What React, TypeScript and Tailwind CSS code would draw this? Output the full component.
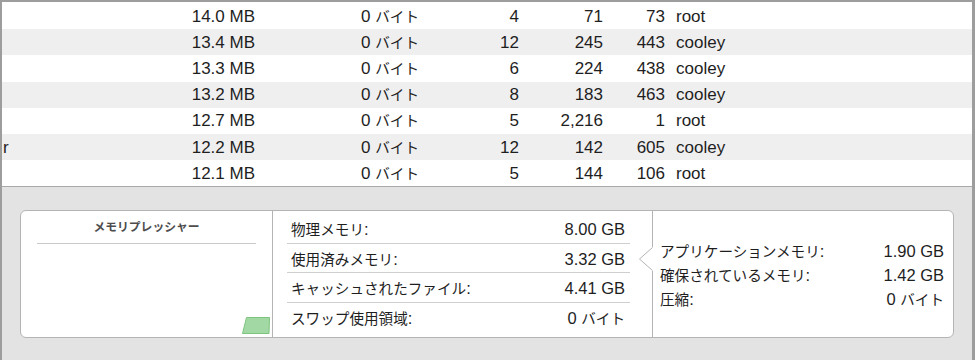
import React from "react";

const J = ({ children }: { children: React.ReactNode }) => (
  <span className="text-[14.6px]">{children}</span>
);

const rows: [string, string, string, string, string, string][] = [
  ["", "14.0 MB", "4", "71", "73", "root"],
  ["", "13.4 MB", "12", "245", "443", "cooley"],
  ["", "13.3 MB", "6", "224", "438", "cooley"],
  ["", "13.2 MB", "8", "183", "463", "cooley"],
  ["", "12.7 MB", "5", "2,216", "1", "root"],
  ["r", "12.2 MB", "12", "142", "605", "cooley"],
  ["", "12.1 MB", "5", "144", "106", "root"],
];

const mid: [string, React.ReactNode][] = [
  ["物理メモリ", "8.00 GB"],
  ["使用済みメモリ", "3.32 GB"],
  ["キャッシュされたファイル", "4.41 GB"],
  ["スワップ使用領域", <>0 <J>バイト</J></>],
];

const right: [string, React.ReactNode][] = [
  ["アプリケーションメモリ", "1.90 GB"],
  ["確保されているメモリ", "1.42 GB"],
  ["圧縮", <>0 <J>バイト</J></>],
];

export default function App() {
  return (
    <div
      className="w-[975px] h-[360px] overflow-hidden bg-[#e3e3e3] border-t-2 border-l-2 border-r-[3px] border-[#9d9d9d] text-[#1e1e1e] flex flex-col"
      style={{ fontFamily: '"Liberation Sans", "Noto Sans CJK JP", sans-serif' }}
    >
      {/* table */}
      <div className="bg-white pt-px border-b border-[#a9a9a9]">
        {rows.map((r, i) => (
          <div
            key={i}
            className={`flex items-center h-[26.2px] text-[17px] leading-none ${
              i % 2 === 1 ? "bg-[#f0eff0]" : "bg-white"
            }`}
          >
            <div className="w-[153px] pl-[1px]">{r[0]}</div>
            <div className="w-[100px] text-right">{r[1]}</div>
            <div className="w-[164px] text-right">
              0 <J>バイト</J>
            </div>
            <div className="w-[100px] text-right">{r[2]}</div>
            <div className="w-[84px] text-right">{r[3]}</div>
            <div className="w-[62px] text-right">{r[4]}</div>
            <div className="flex-1 pl-[11px]">{r[5]}</div>
          </div>
        ))}
      </div>

      {/* bottom panel */}
      <div className="flex-1 pt-[23px] pl-[18px] pr-[18px]">
        <div className="flex h-[128px] bg-white border border-[#b4b4b4] rounded-[6px]">
          {/* pressure */}
          <div className="relative w-[252px] border-r border-[#b4b4b4] flex flex-col">
            <div className="h-[33px] ml-[16px] mr-[16px] border-b border-[#c9c9c9] flex items-center justify-center pt-[1px]">
              <span className="text-[11.8px] font-bold text-[#4d4d4d]">メモリプレッシャー</span>
            </div>
            <svg
              className="absolute right-[1px] bottom-[2px]"
              width="29"
              height="18"
              viewBox="0 0 29 18"
            >
              <polygon
                points="4.5,0.5 27.5,0.5 27,16.5 0.5,16.5"
                fill="#a2d8a3"
                stroke="#7dc47f"
                strokeWidth="1"
              />
            </svg>
          </div>

          {/* middle */}
          <div className="w-[379px] pt-[3px]">
            <div className="ml-[14px] mr-[22px]">
              {mid.map(([l, v], i) => (
                <div
                  key={i}
                  className={`h-[29.5px] flex items-center justify-between pl-[4px] pr-[5px] pt-[2px] text-[16.5px] leading-none ${
                    i < 3 ? "border-b border-[#cfcfcf]" : ""
                  }`}
                >
                  <span>
                    <J>{l}</J>:
                  </span>
                  <span>{v}</span>
                </div>
              ))}
            </div>
          </div>

          {/* right */}
          <div className="relative flex-1 border-l border-[#b4b4b4] flex flex-col justify-center pl-[7px] pr-[9px] pt-[2px]">
            <svg
              className="absolute left-[-15px] top-[36px]"
              width="16"
              height="24"
              viewBox="0 0 16 24"
            >
              <rect x="13" y="0" width="3" height="24" fill="#ffffff" />
              <polyline
                points="14.5,0.5 1.5,12 14.5,23.5"
                fill="none"
                stroke="#b4b4b4"
                strokeWidth="1"
              />
            </svg>
            {right.map(([l, v], i) => (
              <div
                key={i}
                className="h-[24px] flex items-center justify-between text-[16.5px] leading-none"
              >
                <span>
                  <J>{l}</J>:
                </span>
                <span>{v}</span>
              </div>
            ))}
          </div>
        </div>
      </div>
    </div>
  );
}
